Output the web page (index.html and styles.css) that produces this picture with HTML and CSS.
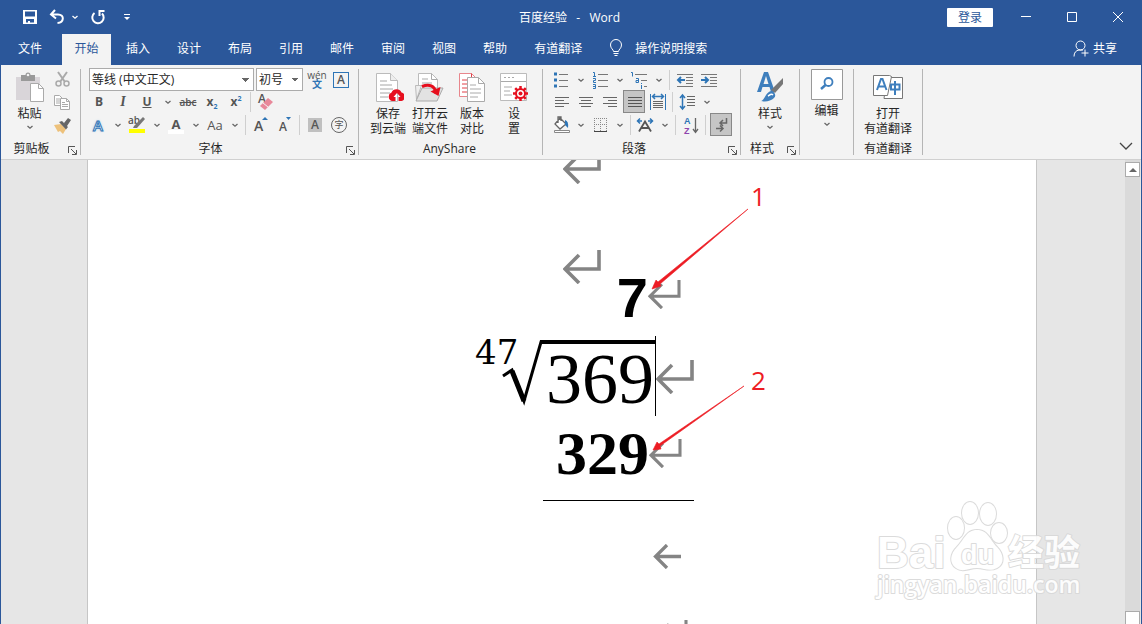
FILE: index.html
```
<!DOCTYPE html>
<html lang="zh-CN">
<head>
    <meta charset="UTF-8">
    <meta name="viewport" content="width=device-width, initial-scale=1.0">
    <title>百度经验 - Word</title>
    <link rel="stylesheet" href="styles.css">
</head>
<body>
    <svg class="symbols" aria-hidden="true">
        <symbol id="caret" viewBox="0 0 8 8"><path d="M1.500 3L4 5.200 6.500 3" fill="none" stroke="currentColor" stroke-width="1.300"/></symbol>
        <symbol id="launch" viewBox="0 0 9 9"><path d="M.5 7V.5H7M3 3l5 5M8.500 4v4.500H4" fill="none" stroke="currentColor"/></symbol>
        <symbol id="enter" viewBox="0 0 38 34"><path d="M36 0v19H2M16 5L2 19l14 14" fill="none" stroke="#848484" stroke-width="3.600"/></symbol>
        <symbol id="page" viewBox="0 0 32 32"><path d="M4.500 2.500h14l7 7v21h-21z" fill="#fff" stroke="#bbb"/><path d="M18.500 2.500v7h7" fill="#eee" stroke="#bbb"/><path d="M8 10h7M8 14h12M8 18h13M8 22h10M8 26h8" stroke="#a6a6a6"/></symbol>
    </svg>

    <header class="header">
        <div class="titlebar">
            <div class="quick">
                <button class="quick-btn" aria-label="保存"><svg width="16" height="16" viewBox="0 0 16 16"><path d="M1 1h14v14H1zM3 2.500V7.500h10V2.500zM4 10v3.500h2V12h2v1.500h4V10z" fill="#fff" fill-rule="evenodd"/></svg></button>
                <button class="quick-btn undo" aria-label="撤消"><svg width="16" height="16" viewBox="0 0 16 16"><path d="M6 1L2 5.500 7 9.500M2.500 5.500H9c7 0 6 8-.5 8.500" fill="none" stroke="#fff" stroke-width="2"/></svg><svg class="caret" width="8" height="8"><use href="#caret"/></svg></button>
                <button class="quick-btn redo" aria-label="重复"><svg width="16" height="16" viewBox="0 0 16 16"><path d="M4.500 4A5.700 5.700 0 1 0 12 4.500" fill="none" stroke="#fff" stroke-width="2"/><path d="M9.500 7V2h5" fill="none" stroke="#fff" stroke-width="2"/></svg></button>
                <button class="quick-btn" aria-label="自定义快速访问工具栏"><svg width="8" height="8" viewBox="0 0 8 8"><path d="M1 1.500h6" stroke="#fff"/><path d="M1 4h6L4 7z" fill="#fff"/></svg></button>
            </div>
            <h1 class="title">百度经验&nbsp;&nbsp; -&nbsp;&nbsp; Word</h1>
            <div class="window-controls">
                <button class="login">登录</button>
                <button class="win-btn" aria-label="最小化"><svg width="12" height="12"><path d="M1 5.500h10" stroke="#fff"/></svg></button>
                <button class="win-btn" aria-label="最大化"><svg width="12" height="12"><path d="M1.500 1.500h9v9h-9z" stroke="#fff" fill="none"/></svg></button>
                <button class="win-btn" aria-label="关闭"><svg width="12" height="12"><path d="M1 1l10 10M11 1L1 11" stroke="#fff"/></svg></button>
            </div>
        </div>
        <nav class="tabs">
            <button class="tab tab-file">文件</button>
            <button class="tab active">开始</button>
            <button class="tab">插入</button>
            <button class="tab">设计</button>
            <button class="tab">布局</button>
            <button class="tab">引用</button>
            <button class="tab">邮件</button>
            <button class="tab">审阅</button>
            <button class="tab">视图</button>
            <button class="tab">帮助</button>
            <button class="tab">有道翻译</button>
            <button class="tab tell-me"><svg width="14" height="18" viewBox="0 0 14 18"><path d="M4.500 12.500c0-2-3-3-3-6.500a5.500 5.500 0 0 1 11 0c0 3.500-3 4.500-3 6.500zM4.500 14.500h5M5.500 16.500h3" fill="none" stroke="#fff"/></svg>操作说明搜索</button>
            <button class="tab share"><svg width="16" height="17" viewBox="0 0 16 17"><circle cx="7.500" cy="5.500" r="4.500" fill="none" stroke="#fff"/><path d="M1 16.500c0-4 2-6 5-6.500h4M12 9.500v7M8.500 13h7" fill="none" stroke="#fff"/></svg>共享</button>
        </nav>
    </header>

    <section class="ribbon">
        <div class="group clipboard">
            <div class="group-body">
                <button class="big paste"><svg width="32" height="32" viewBox="0 0 32 32"><path d="M2 6h24v23H2z" fill="#d9d5d9"/><path d="M7 4h4.500a2.500 2.500 0 0 1 5 0H21v6H7z" fill="#999"/><circle cx="14" cy="4" r="1.300" fill="#f3f3f3"/><path d="M16.500 12.500h8l5 5v13h-13z" fill="#fff" stroke="#aaa"/><path d="M24.500 12.500v5h5" fill="none" stroke="#aaa"/></svg><span>粘贴</span><svg class="caret" width="8" height="8"><use href="#caret"/></svg></button>
                <div class="clip-tools">
                    <button class="tool" aria-label="剪切"><svg width="24" height="22"><path d="M8 4l7 10M17 4l-7 10" stroke="#aaa" stroke-width="2"/><circle cx="8.500" cy="15.500" r="2.500" fill="none" stroke="#aaa" stroke-width="1.500"/><circle cx="16.500" cy="15.500" r="2.500" fill="none" stroke="#aaa" stroke-width="1.500"/></svg></button>
                    <button class="tool" aria-label="复制"><svg width="24" height="22"><path d="M4.500 4.500h5l3 3v7h-8z" fill="#fff" stroke="#aaa"/><path d="M6 8h4M6 10h4M6 12h4" stroke="#aaa"/><path d="M10.500 7.500h6l3 3v8h-9z" fill="#fff" stroke="#aaa"/><path d="M16.500 7.500v3h3M12 11.500h3M12 13.500h6M12 15.500h6" fill="none" stroke="#aaa"/></svg></button>
                    <button class="tool" aria-label="格式刷"><svg width="24" height="22"><path d="M4 11l7-1 5 5-3 5-3-3-2 1z" fill="#edc17b"/><path d="M9 8l3-1 6 6-2 2.500zM14 9l4-5 3 2-4 6z" fill="#666"/></svg></button>
                </div>
            </div>
            <div class="group-label">剪贴板<button class="launcher" aria-label="剪贴板选项"><svg width="9" height="9"><use href="#launch"/></svg></button></div>
        </div>

        <div class="group font">
            <div class="group-body rows">
                <div class="row row-select">
                    <select class="combo combo-name" aria-label="字体"><option>等线 (中文正文)</option></select>
                    <select class="combo combo-size" aria-label="字号"><option>初号</option></select>
                    <button class="tool pinyin" aria-label="拼音指南"><span>wén</span><b>文</b></button>
                    <button class="tool" aria-label="字符边框"><span class="boxed">A</span></button>
                </div>
                <div class="row">
                    <button class="tool"><b>B</b></button>
                    <button class="tool"><b><i class="serif">I</i></b></button>
                    <button class="tool"><b><u>U</u></b></button>
                    <button class="drop" aria-label="下划线样式"><svg width="8" height="8"><use href="#caret"/></svg></button>
                    <button class="tool strike"><s>abc</s></button>
                    <button class="tool"><b>x<sub>2</sub></b></button>
                    <button class="tool"><b>x<sup>2</sup></b></button>
                    <i class="sep"></i>
                    <button class="tool" aria-label="清除格式"><svg width="24" height="22"><text x="4" y="12" class="svg-letter">A</text><path d="M14 7l5 4-8 8-5-4z" fill="#e8889a"/><path d="M9 12l5 4" stroke="#f3f3f3"/></svg></button>
                </div>
                <div class="row">
                    <button class="tool narrow effect">A</button>
                    <button class="drop" aria-label="文本效果"><svg width="8" height="8"><use href="#caret"/></svg></button>
                    <button class="tool narrow" aria-label="突出显示"><svg width="22" height="22"><text x="2" y="10" class="svg-small">ab</text><path d="M17 3l2 2-8 9H7l1-2z" fill="#777"/><path d="M3 15h16v4H3z" fill="#ff0"/></svg></button>
                    <button class="drop" aria-label="突出显示颜色"><svg width="8" height="8"><use href="#caret"/></svg></button>
                    <button class="tool font-color"><b>A</b></button>
                    <button class="drop" aria-label="字体颜色"><svg width="8" height="8"><use href="#caret"/></svg></button>
                    <button class="tool narrow case">Aa</button>
                    <button class="drop" aria-label="更改大小写"><svg width="8" height="8"><use href="#caret"/></svg></button>
                    <i class="sep"></i>
                    <button class="tool" aria-label="增大字号"><svg width="24" height="22"><text x="5" y="17" class="svg-grow">A</text><path d="M13 6l3-3 3 3z" fill="#2e75b6"/></svg></button>
                    <button class="tool" aria-label="减小字号"><svg width="24" height="22"><text x="6" y="17" class="svg-letter">A</text><path d="M13 3h5l-2.500 3z" fill="#2e75b6"/></svg></button>
                    <i class="sep"></i>
                    <button class="tool" aria-label="字符底纹"><span class="shaded">A</span></button>
                    <button class="tool" aria-label="带圈字符"><span class="circled">字</span></button>
                </div>
            </div>
            <div class="group-label">字体<button class="launcher" aria-label="字体选项"><svg width="9" height="9"><use href="#launch"/></svg></button></div>
        </div>

        <div class="group anyshare">
            <div class="group-body">
                <button class="big"><svg width="32" height="32" viewBox="0 0 32 32"><use href="#page" width="32" height="32"/><path d="M20 30a4.500 4.500 0 0 1-.5-8.500 5.500 5.500 0 0 1 10 0 4.400 4.400 0 0 1 0 8.500h-3v-4h2l-3.500-4-3.500 4h2v4z" fill="#e60f1e"/></svg><span>保存<br>到云端</span></button>
                <button class="big"><svg width="32" height="32" viewBox="0 0 32 32"><path d="M4.500 2.500h13l6 6v20h-19z" fill="#fff" stroke="#bbb"/><path d="M17.500 2.500v6h6M8 8h6M8 12h10" fill="none" stroke="#aaa"/><path d="M1.500 14.500h6l-5 14z" fill="#eee" stroke="#bbb"/><path d="M8 17h21l-6 13H2z" fill="#e2e2e2" stroke="#aaa"/><path d="M8 15.500c7-3 13-1 14 7" fill="none" stroke="#e60f1e" stroke-width="3"/><path d="M16.500 20.500l8 4.500 2-9z" fill="#e60f1e"/></svg><span>打开云<br>端文件</span></button>
                <button class="big"><svg width="32" height="32" viewBox="0 0 32 32"><path d="M3.500 2.500h12l5 5v18h-17z" fill="#fff" stroke="#e8868c"/><path d="M15.500 2.500v5h5M6 9h5M6 13h5M6 17h5M6 21h5" fill="none" stroke="#e04048"/><path d="M11.500 6.500h11l6 6v18h-17z" fill="#fff" stroke="#aaa"/><path d="M22.500 6.500v6h6M14 14h6M14 18h11M14 22h11M14 26h8" fill="none" stroke="#aaa"/></svg><span>版本<br>对比</span></button>
                <button class="big"><svg width="32" height="32" viewBox="0 0 32 32"><path d="M2.500 2.500h26v27h-26z" fill="#fff" stroke="#bbb"/><path d="M3 10.500h25M6 6.500h2M10 6.500h2M14 6.500h2" stroke="#aaa"/><path d="M6 16h8M6 20h6M6 24h8" stroke="#aaa"/><circle cx="22.500" cy="22.500" r="4.500" fill="#fff" stroke="#e60f1e" stroke-width="2"/><circle cx="22.500" cy="22.500" r="2" fill="#e60f1e"/><path d="M22.500 15v3M22.500 27v3M15 22.500h3M27 22.500h3M17.200 17.200l2 2M25.800 25.800l2 2M27.800 17.200l-2 2M19.200 25.800l-2 2" stroke="#e60f1e" stroke-width="2.500"/></svg><span>设<br>置</span></button>
            </div>
            <div class="group-label">AnyShare</div>
        </div>

        <div class="group paragraph">
            <div class="group-body rows">
                <div class="row row-select">
                    <button class="tool narrow" aria-label="项目符号"><svg width="22" height="22"><path d="M4 5h3M4 11h3M4 17h3" stroke="#2e75b6" stroke-width="3"/><path d="M9 5.500h9M9 11.500h9M9 17.500h9" stroke="#777"/></svg></button>
                    <button class="drop" aria-label="项目符号库"><svg width="8" height="8"><use href="#caret"/></svg></button>
                    <button class="tool narrow" aria-label="编号"><svg width="22" height="22"><path d="M4 3.500h1.500v4M4 7.500h3M4 9.500h2.500v2H4.500v2H7M4 15.500h2.500v4H4M4 17.500h2.500" fill="none" stroke="#2e75b6"/><path d="M9 5.500h10M9 11.500h10M9 17.500h10" stroke="#777"/></svg></button>
                    <button class="drop" aria-label="编号库"><svg width="8" height="8"><use href="#caret"/></svg></button>
                    <button class="tool narrow" aria-label="多级列表"><svg width="22" height="22"><path d="M3 3.500h1.500v4M8 9.500h2.500v4H8v-2h2.500M13.500 14v1M13.500 16v4" fill="none" stroke="#2e75b6"/><path d="M7 5.500h12M13 11.500h6M16 17.500h3" stroke="#777"/></svg></button>
                    <button class="drop" aria-label="多级列表库"><svg width="8" height="8"><use href="#caret"/></svg></button>
                    <i class="sep"></i>
                    <button class="tool" aria-label="减少缩进量"><svg width="24" height="22"><path d="M4 5.500h16M13 8.500h7M13 11.500h7M13 14.500h7M4 17.500h16" stroke="#777"/><path d="M12 11H5M8 8l-3 3 3 3" fill="none" stroke="#2e75b6" stroke-width="2"/></svg></button>
                    <button class="tool" aria-label="增加缩进量"><svg width="24" height="22"><path d="M4 5.500h16M13 8.500h7M13 11.500h7M13 14.500h7M4 17.500h16" stroke="#777"/><path d="M4 11h7M8 8l3 3-3 3" fill="none" stroke="#2e75b6" stroke-width="2"/></svg></button>
                </div>
                <div class="row">
                    <button class="tool" aria-label="左对齐"><svg width="24" height="22"><path d="M5 6.500h14M5 9.500h9M5 12.500h14M5 15.500h9" stroke="#666"/></svg></button>
                    <button class="tool" aria-label="居中"><svg width="24" height="22"><path d="M5 6.500h14M7 9.500h10M5 12.500h14M7 15.500h10" stroke="#666"/></svg></button>
                    <button class="tool" aria-label="右对齐"><svg width="24" height="22"><path d="M5 6.500h14M10 9.500h9M5 12.500h14M10 15.500h9" stroke="#666"/></svg></button>
                    <button class="tool pressed" aria-label="两端对齐"><svg width="22" height="22"><path d="M4 6.500h14M4 9.500h14M4 12.500h14M4 15.500h14" stroke="#555"/></svg></button>
                    <button class="tool" aria-label="分散对齐"><svg width="24" height="22"><path d="M4.500 3v16M19.500 3v16" stroke="#2e75b6"/><path d="M6 5.500h12M9 3L6.500 5.500 9 8M15 3l2.500 2.500L15 8" fill="none" stroke="#2e75b6" stroke-width="1.500"/><path d="M7 10.500h10M7 12.500h10M7 14.500h10M7 16.500h10" stroke="#666"/></svg></button>
                    <i class="sep"></i>
                    <button class="tool narrow" aria-label="行距"><svg width="22" height="22"><path d="M6.500 5v12M4 7l2.500-3L9 7M4 15l2.500 3L9 15" fill="none" stroke="#2e75b6" stroke-width="1.500"/><path d="M11 5.500h8M11 8.500h8M11 11.500h8M11 14.500h8" stroke="#666"/></svg></button>
                    <button class="drop" aria-label="行距选项"><svg width="8" height="8"><use href="#caret"/></svg></button>
                </div>
                <div class="row">
                    <button class="tool narrow" aria-label="底纹"><svg width="22" height="22"><path d="M10 4l6 6-6 5-5-5zM8 9V3h3v4" fill="#fff" stroke="#666" stroke-width="1.300"/><path d="M15 6q4 1 3 8l-3-3z" fill="#2e75b6"/><path d="M4.500 16.500h15v2h-15z" fill="#fff" stroke="#888"/></svg></button>
                    <button class="drop" aria-label="底纹颜色"><svg width="8" height="8"><use href="#caret"/></svg></button>
                    <button class="tool narrow" aria-label="边框"><svg width="22" height="22"><path d="M5 4.500h13M5 10.500h13M5.500 4v13M11.500 4v13M17.500 4v13" stroke="#888" stroke-dasharray="1 1"/><path d="M5 17.500h13" stroke="#444"/></svg></button>
                    <button class="drop" aria-label="边框样式"><svg width="8" height="8"><use href="#caret"/></svg></button>
                    <i class="sep"></i>
                    <button class="tool narrow" aria-label="中文版式"><svg width="22" height="22"><path d="M5 17.500l6-10 6 10M7.500 14h7" fill="none" stroke="#555" stroke-width="1.800"/><path d="M3 7h5M6 4.500L3.500 7 6 9.500M14 7h5M16 4.500L18.500 7 16 9.500" fill="none" stroke="#2e75b6" stroke-width="1.500"/></svg></button>
                    <button class="drop" aria-label="中文版式选项"><svg width="8" height="8"><use href="#caret"/></svg></button>
                    <i class="sep"></i>
                    <button class="tool" aria-label="排序"><svg width="24" height="22"><text x="5" y="10" class="svg-sort a">A</text><text x="5" y="20" class="svg-sort z">Z</text><path d="M16.500 4v14M14 15l2.500 3.500L19 15" fill="none" stroke="#666" stroke-width="1.300"/></svg></button>
                    <i class="sep"></i>
                    <button class="tool pressed" aria-label="显示编辑标记"><svg width="22" height="22"><path d="M15.500 4v5H9M12 6L9 9l3 3M5 14.500h6M9 11.500l3 3-3 3" fill="none" stroke="#666" stroke-width="1.500"/></svg></button>
                </div>
            </div>
            <div class="group-label">段落<button class="launcher" aria-label="段落选项"><svg width="9" height="9"><use href="#launch"/></svg></button></div>
        </div>

        <div class="group styles">
            <div class="group-body">
                <button class="big"><svg width="32" height="32" viewBox="0 0 32 32"><path d="M3 21L10 1h4l7 20h-4l-1.500-5h-7L7 21zM9.500 13h5L12 5z" fill="#3f7fbd" fill-rule="evenodd"/><path d="M17 19L29 7v6l-8 9z" fill="#777"/><path d="M17 20c3 0 6 4 3 7-3 3-8 4-13 3 4-1 4-8 10-10z" fill="#3f7fbd"/><path d="M14 25c2-1 3-3 5-1" fill="none" stroke="#fff" stroke-width="1.500"/></svg><span>样式</span><svg class="caret" width="8" height="8"><use href="#caret"/></svg></button>
            </div>
            <div class="group-label">样式<button class="launcher" aria-label="样式选项"><svg width="9" height="9"><use href="#launch"/></svg></button></div>
        </div>

        <div class="group editing">
            <div class="group-body">
                <button class="big find"><svg width="32" height="31" viewBox="0 0 32 31"><path d="M.5.500h31v30H.5z" fill="#fff" stroke="#999"/><circle cx="17.500" cy="13" r="4" fill="none" stroke="#3f7fbd" stroke-width="1.800"/><path d="M14.500 16L10 20" stroke="#3f7fbd" stroke-width="2.500"/></svg><span>编辑</span><svg class="caret" width="8" height="8"><use href="#caret"/></svg></button>
            </div>
        </div>

        <div class="group youdao">
            <div class="group-body">
                <button class="big"><svg width="32" height="32" viewBox="0 0 32 32"><path d="M15 6.500h15.500v21H12z" fill="#fff" stroke="#777"/><path d="M1.500 4.500h16l2 1-4 19h-14z" fill="#fff" stroke="#777"/><path d="M5 19l4-11h1.500l4 11M6.500 15.500h6" fill="none" stroke="#3f7fbd" stroke-width="2"/><path d="M19 13.500h8.500v5H19zM23 10v14" fill="none" stroke="#3f7fbd" stroke-width="2"/></svg><span>打开<br>有道翻译</span></button>
            </div>
            <div class="group-label">有道翻译</div>
        </div>

        <button class="collapse" aria-label="折叠功能区"><svg width="14" height="10"><path d="M1 2l6 6 6-6" fill="none" stroke="#444" stroke-width="1.300"/></svg></button>
    </section>

    <main class="workspace">
        <article class="sheet">
            <div class="work">
                <p class="line line-first"><svg width="38" height="34"><use href="#enter"/></svg></p>
                <p class="line line-second"><svg width="38" height="34"><use href="#enter"/></svg></p>
                <p class="line line-quotient"><span>7</span><svg width="33" height="29"><use href="#enter"/></svg></p>
                <p class="line line-root">
                    <span class="index">47</span>
                    <svg class="radical" width="42" height="80"><path d="M1 40l9-6 12 31L39 6h3" fill="none" stroke="#000" stroke-width="3"/><path d="M10 35l12 30" stroke="#000" stroke-width="5"/></svg>
                    <span class="radicand">369</span>
                    <svg width="38" height="34"><use href="#enter"/></svg>
                </p>
                <p class="line line-product"><span>329</span><svg width="33" height="29"><use href="#enter"/></svg></p>
                <hr class="rule">
                <p class="line line-arrow"><svg width="28" height="25"><path d="M28 12.500H2M14 1L2.500 12.500 14 24" fill="none" stroke="#848484" stroke-width="3.300"/></svg></p>
                <p class="line line-last"><svg width="33" height="29"><use href="#enter"/></svg></p>

                <svg class="pointers" width="300" height="320">
                    <path d="M273 49L185 124l1 2-9 3 4-9 2 2z" fill="#ed1c24" stroke="#ed1c24" stroke-width=".6"/>
                    <path d="M269 226l-84 60 1 3-8 1 4-8 2 2z" fill="#ed1c24" stroke="#ed1c24" stroke-width=".6"/>
                </svg>
                <span class="note note-one">1</span>
                <span class="note note-two">2</span>
            </div>
        </article>
        <div class="scrollbar">
            <button class="scroll-up" aria-label="向上滚动"><svg width="8" height="5"><path d="M0 5l4-4 4 4z" fill="#666"/></svg></button>
            <div class="thumb"></div>
        </div>
        <svg class="watermark" width="212" height="110" viewBox="0 0 212 110">
            <g class="mark">
                <text x="4" y="74" class="mark-bai">Bai</text>
                <ellipse cx="83" cy="34" rx="8" ry="11"/>
                <ellipse cx="97" cy="19" rx="8" ry="11"/>
                <ellipse cx="115" cy="20" rx="8" ry="11"/>
                <ellipse cx="126" cy="39" rx="8" ry="10"/>
                <path d="M104 36c11 0 13 10 20 17s8 17 0 21-12 0-20 0-14 5-21 0-6-14 1-21 9-17 20-17z"/>
                <text x="88" y="70" class="mark-du">du</text>
                <text x="135" y="72" class="mark-cn">经验</text>
                <text x="4" y="99" class="mark-url">jingyan.baidu.com</text>
            </g>
        </svg>
    </main>
</body>
</html>
```
FILE: styles.css
```
* {
    box-sizing: border-box;
}

body {
    margin: 0;
    height: 100vh;
    display: flex;
    flex-direction: column;
    overflow: hidden;
    font-family: "Open Sans", "Noto Sans CJK SC", sans-serif;
    font-size: 12px;
    color: #262626;
    background: #e6e6e6;
    border: solid #2b579a;
    border-width: 0 1px;
}

button {
    padding: 0;
    border: 0;
    background: none;
    color: inherit;
    font: inherit;
}

svg {
    display: block;
    flex: none;
}

.symbols {
    position: absolute;
    width: 0;
    height: 0;
}

/* title bar and tabs */
.header {
    background: #2b579a;
    color: #fff;
}

.titlebar {
    display: grid;
    grid-template-columns: 1fr auto 1fr;
    align-items: center;
    height: 34px;
}

.title {
    margin: 0;
    padding-right: 3px;
    font-size: 12px;
    font-weight: normal;
}

.quick {
    display: flex;
    align-items: center;
    gap: 11px;
    padding-left: 21px;
}

.quick-btn {
    display: flex;
    align-items: center;
}

.undo {
    gap: 6px;
}

.redo {
    margin-right: 6px;
}

.window-controls {
    display: flex;
    justify-content: flex-end;
    align-items: center;
}

.login {
    width: 46px;
    height: 19px;
    margin-right: 10px;
    background: #fff;
    color: #2b579a;
    border-radius: 1px;
    line-height: 19px;
}

.win-btn {
    width: 46px;
    height: 32px;
    display: grid;
    place-items: center;
}

.tabs {
    display: flex;
    gap: 3px;
    height: 31px;
    padding-right: 12px;
}

.tab {
    padding: 0 12px;
    height: 31px;
    padding-bottom: 3px;
    white-space: nowrap;
}

.tab-file {
    width: 58px;
}

.tab.active {
    width: 49px;
    background: #f3f3f3;
    color: #2b579a;
}

.tell-me,
.share {
    display: flex;
    align-items: center;
}

.tell-me {
    gap: 12px;
}

.share {
    gap: 4px;
    margin-left: auto;
}

/* ribbon */
.ribbon {
    display: flex;
    height: 95px;
    padding: 4px 0;
    background: #f3f3f3;
    border-bottom: 1px solid #d0d0d0;
}

.group {
    display: flex;
    flex-direction: column;
    border-right: 1px solid #b5b5b5;
}

.group-body {
    display: flex;
    height: 71px;
}

.group-label {
    position: relative;
    height: 16px;
    line-height: 19px;
    text-align: center;
}

.launcher {
    position: absolute;
    right: 3px;
    bottom: 0;
    color: #555;
}

.big {
    display: flex;
    flex-direction: column;
    align-items: center;
    min-width: 42px;
    padding-top: 2px;
    line-height: 15px;
    white-space: nowrap;
}

.big span {
    margin-top: 3px;
}

.big .caret {
    margin-top: 2px;
    color: #666;
}

.clip-tools,
.rows {
    flex-direction: column;
}

.row {
    display: flex;
    align-items: center;
    height: 23px;
}

.row-select {
    height: 21px;
}

.tool {
    display: grid;
    place-items: center;
    width: 24px;
    height: 22px;
    color: #555;
    line-height: 16px;
}

.tool.narrow {
    width: 22px;
}

.tool.pressed {
    width: 22px;
    height: 23px;
    margin: 0 1px;
    background: #c5c5c5;
    border: 1px solid #888;
}

.drop {
    width: 17px;
    height: 22px;
    display: grid;
    place-items: center;
    color: #666;
}

.sep {
    width: 1px;
    height: 20px;
    margin: 0 3px 0 2px;
    background: #cfcfcf;
}

.clipboard {
    width: 80px;
}

.paste {
    width: 49px;
    margin-left: 4px;
}

.clip-tools {
    display: flex;
    margin: -2px 0 0 -4px;
}

.clip-tools .tool {
    height: 23px;
}

.clipboard .group-label {
    padding-right: 18px;
}

.font {
    width: 278px;
    padding-left: 6px;
}

.font .group-label {
    padding-right: 24px;
}

.combo {
    appearance: none;
    flex: none;
    height: 23px;
    padding: 0 2px;
    border: 1px solid #ababab;
    border-radius: 0;
    color: #262626;
    font: inherit;
    background-color: #fff;
    background-image: linear-gradient(45deg, transparent 50%, #666 50%), linear-gradient(135deg, #666 50%, transparent 50%);
    background-size: 4px 4px;
    background-position: right 7px center, right 3px center;
    background-repeat: no-repeat;
}

.combo-name {
    width: 165px;
    margin-left: 2px;
}

.combo-size {
    width: 47px;
    margin: 0 2px;
}

.pinyin {
    font-size: 10px;
    line-height: 9px;
    align-content: center;
}

.pinyin b {
    color: #2e75b6;
}

.boxed {
    width: 16px;
    height: 16px;
    border: 1px solid #2e75b6;
    line-height: 14px;
    font-weight: 600;
}

.serif {
    font-family: "Liberation Serif", serif;
    font-size: 14px;
}

.strike {
    font-size: 10px;
    font-weight: 600;
}

.tool sub,
.tool sup {
    font-size: 7px;
    line-height: 0;
    color: #2e75b6;
}

.effect {
    font-size: 15px;
    font-weight: 600;
    color: #fff;
    -webkit-text-stroke: 1px #2e75b6;
    text-shadow: 0 0 3px #9dc3e6;
}

.tool.font-color {
    width: 16px;
    height: 18px;
    margin: 0 3px;
    border-bottom: 4px solid #fff;
    font-size: 13px;
}

.case {
    font-size: 13px;
}

.shaded {
    width: 14px;
    height: 14px;
    background: #c0c0c0;
    line-height: 14px;
    font-weight: 600;
}

.circled {
    width: 16px;
    height: 16px;
    border: 1px solid #666;
    border-radius: 50%;
    font-size: 9px;
    line-height: 13px;
}

.svg-letter,
.svg-grow,
.svg-small,
.svg-sort {
    fill: #555;
    font-weight: 600;
    font-size: 12px;
}

.svg-grow {
    font-size: 14px;
}

.svg-small {
    font-size: 10px;
}

.svg-sort {
    font: bold 9px "Liberation Sans", sans-serif;
}

.svg-sort.a {
    fill: #2e75b6;
}

.svg-sort.z {
    fill: #8e44ad;
}

.anyshare {
    width: 184px;
    padding-left: 8px;
}

.anyshare .group-label {
    padding-right: 10px;
}

.paragraph {
    width: 198px;
    padding-left: 7px;
}

.paragraph .group-label {
    padding-right: 22px;
}

.styles {
    width: 59px;
}

.styles .big {
    width: 58px;
}

.styles .group-label {
    padding-right: 16px;
}

.editing {
    width: 54px;
}

.find {
    width: 53px;
    padding-top: 0;
}

.youdao {
    width: 69px;
}

.youdao .big {
    width: 68px;
}

.collapse {
    margin: auto 8px 4px auto;
}

/* document */
.workspace {
    position: relative;
    flex: 1;
    min-height: 0;
    display: flex;
}

.sheet {
    flex: 1;
    margin: 0 88px 0 86px;
    padding-left: 45px;
    background: #fff;
    border: solid #c6c6c6;
    border-width: 0 1px;
    overflow: hidden;
}

.work {
    position: relative;
    width: 219px;
    margin: 0 auto;
    color: #000;
}

.line {
    display: flex;
    margin: 0;
}

.line-first {
    height: 24px;
    padding-left: 88px;
    align-items: flex-end;
}

.line-second {
    height: 28px;
    margin-top: 66px;
    padding-left: 88px;
}

.line-quotient {
    height: 40px;
    justify-content: flex-end;
    padding-right: 13px;
    font: bold 56px/40px "Liberation Sans", sans-serif;
}

.line-quotient svg {
    margin-top: 2px;
}

.line-root {
    height: 80px;
    margin-top: 18px;
}

.index {
    width: 27px;
    font: 34px/32px "DejaVu Serif", serif;
    white-space: nowrap;
}

.radicand {
    position: relative;
    width: 113px;
    padding-left: 2px;
    border-right: 1px solid #000;
    font: 72px/86px "Liberation Serif", serif;
}

.radicand::before {
    content: "";
    position: absolute;
    top: 4px;
    left: -4px;
    right: 0;
    height: 4px;
    background: #000;
}

.line-root > svg:last-child {
    margin-top: 24px;
}

.line-product {
    height: 40px;
    margin-top: 17px;
    justify-content: flex-end;
    padding-right: 12px;
    font: bold 62px/40px "Liberation Serif", serif;
}

.line-product svg {
    margin-top: 6px;
}

.rule {
    width: 151px;
    margin: 27px 0 0 auto;
    border: 0;
    border-top: 1px solid #000;
}

.line-arrow {
    margin-top: 43px;
    padding-left: 178px;
}

.line-last {
    margin-top: 51px;
    padding-left: 180px;
}

.pointers {
    position: absolute;
    top: 0;
    left: 0;
}

.note {
    position: absolute;
    left: 276px;
    color: #ed1c24;
    font-size: 26px;
    line-height: 30px;
}

.note-one {
    top: 21px;
}

.note-two {
    top: 205px;
}

.scrollbar {
    display: flex;
    flex-direction: column;
    justify-content: space-between;
    width: 15px;
    margin-right: 1px;
    padding-top: 2px;
    background: #dadada;
}

.scroll-up {
    display: grid;
    place-items: center;
    height: 15px;
    background: #fff;
    border: 1px solid #ababab;
}

.thumb {
    height: 13px;
    background: #fff;
    border: 1px solid #ababab;
    border-bottom: 0;
}

.watermark {
    position: absolute;
    right: 56px;
    bottom: 20px;
}

.mark {
    fill: #fff;
    stroke: #d8d8d8;
    stroke-width: 2px;
    stroke-linejoin: round;
    paint-order: stroke;
    opacity: 0.9;
    font-family: "Liberation Sans", "Noto Sans CJK SC", sans-serif;
    font-weight: bold;
}

.mark-bai {
    font-size: 44px;
}

.mark-du {
    font-size: 27px;
}

.mark-cn {
    font-size: 36px;
}

.mark-url {
    font-family: "Open Sans", sans-serif;
    font-size: 23px;
    font-weight: 600;
}
```
